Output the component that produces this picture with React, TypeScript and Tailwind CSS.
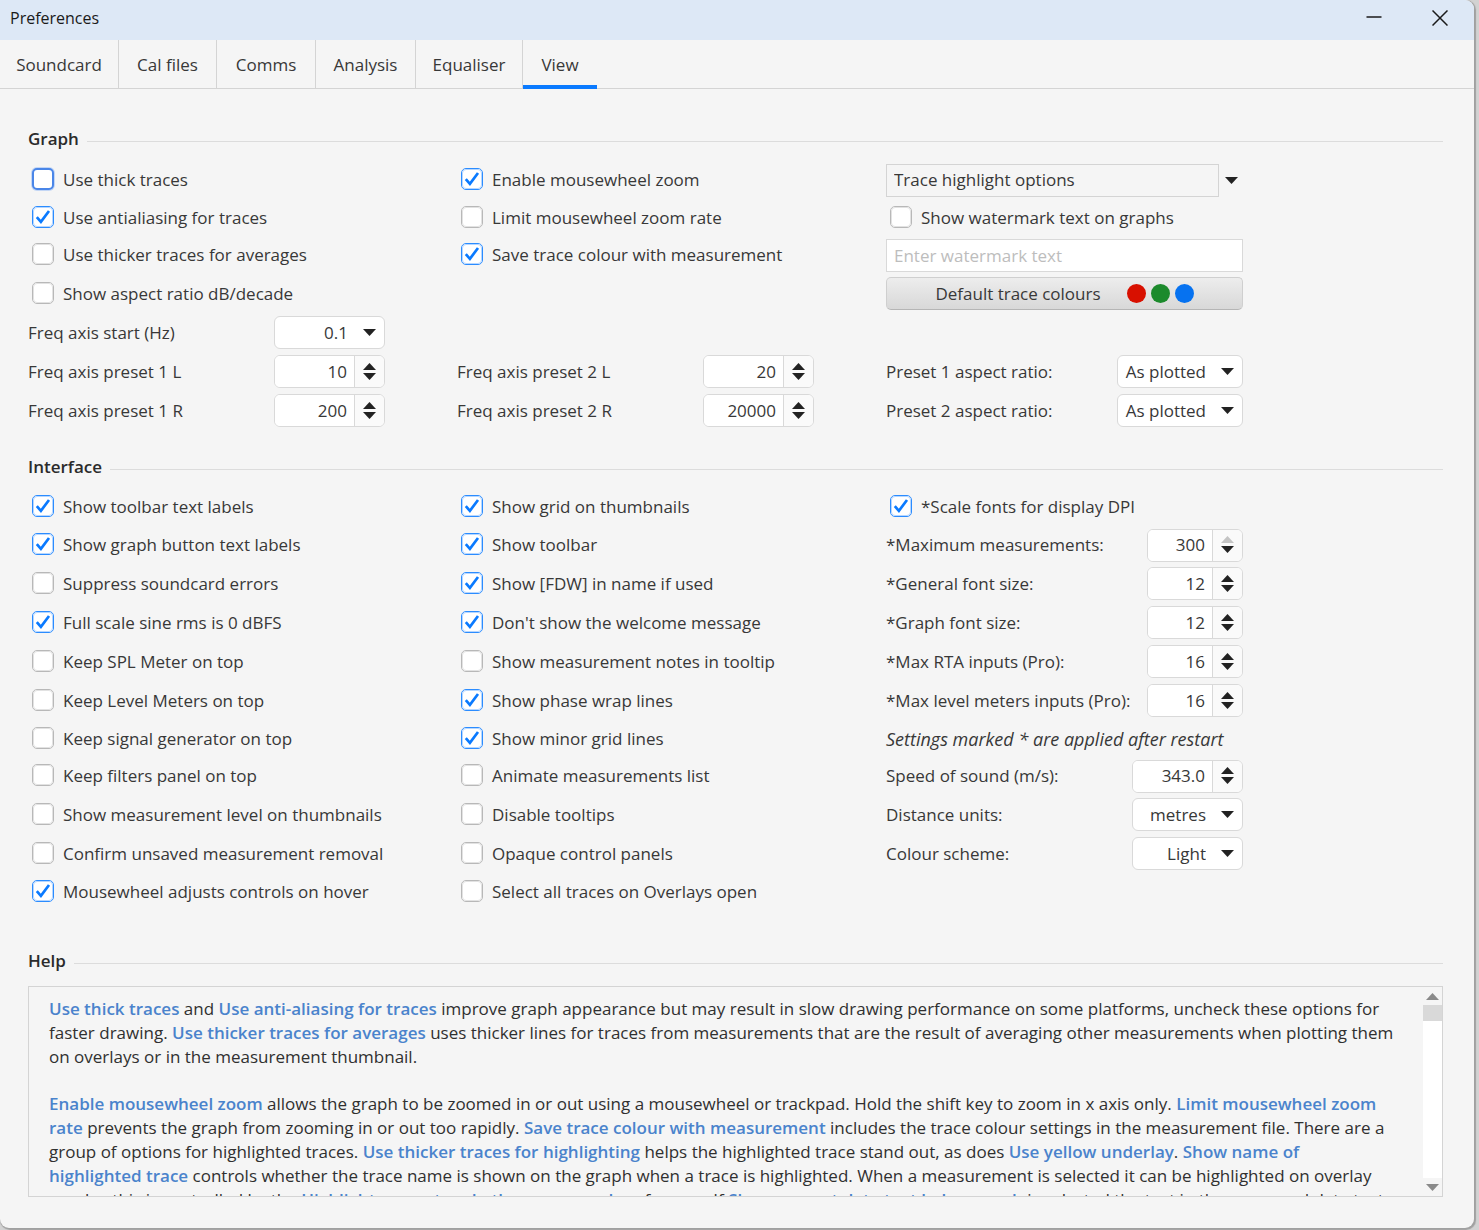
import React, { useId } from "react";

function TriangleDown({ className = "" }: { className?: string }) {
  return (
    <svg viewBox="0 0 13 7" className={`h-[7px] w-[13px] ${className}`} aria-hidden="true">
      <path d="M0 0H13L6.5 7Z" fill="currentColor" />
    </svg>
  );
}

function TriangleUp({ className = "" }: { className?: string }) {
  return (
    <svg viewBox="0 0 13 7" className={`h-[7px] w-[13px] ${className}`} aria-hidden="true">
      <path d="M0 7H13L6.5 0Z" fill="currentColor" />
    </svg>
  );
}

function Check({ label, on = false, focused = false }: { label: string; on?: boolean; focused?: boolean }) {
  return (
    <label className="flex items-center gap-[9px] pl-1 whitespace-nowrap">
      <span className="grid h-6 shrink-0 place-items-start">
        <input
          type="checkbox"
          defaultChecked={on}
          className={`peer col-start-1 row-start-1 h-[22px] w-[22px] appearance-none rounded-[5px] bg-white ${
            focused
              ? "border-2 border-[#4a86e8] ring-1 ring-[#c3d6f5]"
              : "border border-[#b8b8b8] checked:border-[#2b8cff] outline outline-[#e2e2e2] -outline-offset-2 checked:outline-[#b5d6ff]"
          }`}
        />
        <svg
          viewBox="0 0 22 22"
          className="pointer-events-none invisible col-start-1 row-start-1 h-[22px] w-[22px] peer-checked:visible"
          aria-hidden="true"
        >
          <path d="M4.8 11.2L8.9 15.8L17 5" fill="none" stroke="#0a7aff" strokeWidth="2.7" />
        </svg>
      </span>
      {label}
    </label>
  );
}

function Field({ label, children }: { label: string; children: (id: string) => React.ReactNode }) {
  const id = useId();
  return (
    <div className="flex w-[357px] items-center justify-between whitespace-nowrap">
      <label htmlFor={id}>{label}</label>
      {children(id)}
    </div>
  );
}

function Spin({ label, value, width, max = false }: { label: string; value: string; width: string; max?: boolean }) {
  return (
    <Field label={label}>
      {(id) => (
        <div className={`flex h-[33px] overflow-hidden rounded-md border border-[#d9d9d9] bg-white ${width}`}>
          <input
            id={id}
            type="text"
            inputMode="decimal"
            defaultValue={value}
            className="min-w-0 flex-1 bg-white pr-[7px] text-right outline-none"
          />
          <div className="flex w-[30px] flex-col items-center justify-center gap-[3px] border-l border-[#d9d9d9] bg-[#fafafa] pb-px">
            <button type="button" aria-label={`Increase ${label}`} disabled={max} className="text-[#222] disabled:text-[#c4c4c4]">
              <TriangleUp className="block" />
            </button>
            <button type="button" aria-label={`Decrease ${label}`} className="text-[#222]">
              <TriangleDown className="block" />
            </button>
          </div>
        </div>
      )}
    </Field>
  );
}

function Select({ label, value, width }: { label: string; value: string; width: string }) {
  return (
    <Field label={label}>
      {(id) => (
        <div className={`grid h-[33px] items-center ${width}`}>
          <select
            id={id}
            className="col-start-1 row-start-1 h-full w-full appearance-none rounded-md border border-[#d9d9d9] bg-white pr-9 text-right [text-align-last:right]"
          >
            <option>{value}</option>
          </select>
          <TriangleDown className="pointer-events-none col-start-1 row-start-1 mr-[9px] justify-self-end text-[#222]" />
        </div>
      )}
    </Field>
  );
}

function Heading({ children }: { children: string }) {
  return (
    <h2 className="flex h-6 items-center gap-2 font-semibold text-[#2b2b2b]">
      {children}
      <span className="mt-1 h-px flex-1 bg-[#dcdcdc]" />
    </h2>
  );
}

function Title({ children }: { children: string }) {
  return <b className="font-semibold text-[#4a83cc]">{children}</b>;
}

const TABS = [
  { name: "Soundcard", width: "w-[119px]" },
  { name: "Cal files", width: "w-[98px]" },
  { name: "Comms", width: "w-[99px]" },
  { name: "Analysis", width: "w-[100px]" },
  { name: "Equaliser", width: "w-[107px]" },
];

export default function App() {
  return (
    <div className="min-h-screen bg-[#d2d2d2] pr-[5px] pb-[3px] font-['Open_Sans','Noto_Sans',sans-serif] text-[17px] leading-6 text-[#383838]">
      <main className="overflow-hidden rounded-tr-[9px] rounded-b-[9px] bg-[#f5f5f5] shadow-[1px_1px_1px_1px_#a0a0a0]">
        <header className="flex h-10 items-center justify-between bg-[#dde8f6] pr-[26px] pb-1 pl-[10px] text-[#1a1a1a]">
          <h1 className="text-base">Preferences</h1>
          <div className="flex items-center gap-[50px]">
            <button type="button" aria-label="Minimise" className="block">
              <svg viewBox="0 0 16 16" className="block h-4 w-4" aria-hidden="true">
                <path d="M0.5 7H15.5" stroke="#1a1a1a" strokeWidth="1.7" />
              </svg>
            </button>
            <button type="button" aria-label="Close" className="block">
              <svg viewBox="0 0 16 16" className="block h-4 w-4" aria-hidden="true">
                <path d="M0.5 0.5L15.5 15.5M15.5 0.5L0.5 15.5" stroke="#1a1a1a" strokeWidth="1.5" />
              </svg>
            </button>
          </div>
        </header>

        <nav role="tablist" className="flex h-[49px] border-b border-[#d4d4d4]">
          {TABS.map((t) => (
            <button
              key={t.name}
              type="button"
              role="tab"
              aria-selected="false"
              className={`border-r border-[#d4d4d4] pt-0.5 ${t.width}`}
            >
              {t.name}
            </button>
          ))}
          <button
            type="button"
            role="tab"
            aria-selected="true"
            className="-mb-px h-[49px] w-[74px] border-b-4 border-[#0a7aff] pt-1"
          >
            View
          </button>
        </nav>

        <div className="pt-[38px] pr-[31px] pb-[31px] pl-7">
          <section>
            <Heading>Graph</Heading>
            <div className="mt-[10px] grid grid-flow-col grid-cols-[429fr_429fr_557fr] grid-rows-[38px_37px_38px_39px_39px_39px_39px] items-center">
              <Check label="Use thick traces" focused />
              <Check label="Use antialiasing for traces" on />
              <Check label="Use thicker traces for averages" />
              <Check label="Show aspect ratio dB/decade" />
              <Select label="Freq axis start (Hz)" value="0.1" width="w-[111px]" />
              <Spin label="Freq axis preset 1 L" value="10" width="w-[111px]" />
              <Spin label="Freq axis preset 1 R" value="200" width="w-[111px]" />

              <Check label="Enable mousewheel zoom" on />
              <Check label="Limit mousewheel zoom rate" />
              <Check label="Save trace colour with measurement" on />
              <span className="row-span-2" />
              <Spin label="Freq axis preset 2 L" value="20" width="w-[111px]" />
              <Spin label="Freq axis preset 2 R" value="20000" width="w-[111px]" />

              <div className="grid h-[33px] w-[357px] grid-cols-[333px_24px] items-center">
                <select
                  aria-label="Trace highlight options"
                  className="col-span-2 col-start-1 row-start-1 h-full w-full appearance-none pl-2"
                >
                  <option>Trace highlight options</option>
                </select>
                <span className="pointer-events-none col-start-1 row-start-1 h-full border border-[#d4d4d4]" />
                <TriangleDown className="pointer-events-none col-start-2 row-start-1 ml-[6px] text-[#222]" />
              </div>
              <Check label="Show watermark text on graphs" />
              <input
                type="text"
                aria-label="Watermark text"
                placeholder="Enter watermark text"
                className="h-[33px] w-[357px] border border-[#d9d9d9] bg-white px-[7px] placeholder:text-[#bdbdbd]"
              />
              <button
                type="button"
                className="flex h-[33px] w-[357px] items-center justify-center gap-[26px] rounded-[5px] border border-[#cfcfcf] border-b-[#b5b5b5] bg-linear-to-b from-[#ededed] to-[#d8d8d8]"
              >
                Default trace colours
                <span className="flex gap-[5px]">
                  <span className="h-[19px] w-[19px] rounded-full bg-[#d81000]" />
                  <span className="h-[19px] w-[19px] rounded-full bg-[#1c8a2c]" />
                  <span className="h-[19px] w-[19px] rounded-full bg-[#0672f0]" />
                </span>
              </button>
              <span />
              <Select label="Preset 1 aspect ratio:" value="As plotted" width="w-[126px]" />
              <Select label="Preset 2 aspect ratio:" value="As plotted" width="w-[126px]" />
            </div>
          </section>

          <section className="mt-[25px]">
            <Heading>Interface</Heading>
            <div className="mt-[9px] grid grid-flow-col grid-cols-[429fr_429fr_557fr] grid-rows-[38px_38px_39px_39px_39px_39px_37px_38px_39px_39px_37px] items-center">
              <Check label="Show toolbar text labels" on />
              <Check label="Show graph button text labels" on />
              <Check label="Suppress soundcard errors" />
              <Check label="Full scale sine rms is 0 dBFS" on />
              <Check label="Keep SPL Meter on top" />
              <Check label="Keep Level Meters on top" />
              <Check label="Keep signal generator on top" />
              <Check label="Keep filters panel on top" />
              <Check label="Show measurement level on thumbnails" />
              <Check label="Confirm unsaved measurement removal" />
              <Check label="Mousewheel adjusts controls on hover" on />

              <Check label="Show grid on thumbnails" on />
              <Check label="Show toolbar" on />
              <Check label="Show [FDW] in name if used" on />
              <Check label="Don't show the welcome message" on />
              <Check label="Show measurement notes in tooltip" />
              <Check label="Show phase wrap lines" on />
              <Check label="Show minor grid lines" on />
              <Check label="Animate measurements list" />
              <Check label="Disable tooltips" />
              <Check label="Opaque control panels" />
              <Check label="Select all traces on Overlays open" />

              <Check label="*Scale fonts for display DPI" on />
              <Spin label="*Maximum measurements:" value="300" width="w-24" max />
              <Spin label="*General font size:" value="12" width="w-24" />
              <Spin label="*Graph font size:" value="12" width="w-24" />
              <Spin label="*Max RTA inputs (Pro):" value="16" width="w-24" />
              <Spin label="*Max level meters inputs (Pro):" value="16" width="w-24" />
              <p className="text-lg leading-6 italic">Settings marked * are applied after restart</p>
              <Spin label="Speed of sound (m/s):" value="343.0" width="w-[111px]" />
              <Select label="Distance units:" value="metres" width="w-[111px]" />
              <Select label="Colour scheme:" value="Light" width="w-[111px]" />
            </div>
          </section>

          <section className="mt-[39px]">
            <Heading>Help</Heading>
            <div className="mt-[13px] flex h-[211px] border border-[#d4d4d4] text-[#303030]">
              <div className="flex-1 overflow-hidden pt-[10px] pl-5 whitespace-nowrap">
                <p className="mb-[23px]">
                  <Title>Use thick traces</Title> and <Title>Use anti-aliasing for traces</Title> improve graph
                  appearance but may result in slow drawing performance on some platforms, uncheck these options for
                  <br />
                  faster drawing. <Title>Use thicker traces for averages</Title> uses thicker lines for traces from
                  measurements that are the result of averaging other measurements when plotting them
                  <br />
                  on overlays or in the measurement thumbnail.
                </p>
                <p>
                  <Title>Enable mousewheel zoom</Title> allows the graph to be zoomed in or out using a mousewheel or
                  trackpad. Hold the shift key to zoom in x axis only. <Title>Limit mousewheel zoom</Title>
                  <br />
                  <Title>rate</Title> prevents the graph from zooming in or out too rapidly.{" "}
                  <Title>Save trace colour with measurement</Title> includes the trace colour settings in the
                  measurement file. There are a
                  <br />
                  group of options for highlighted traces. <Title>Use thicker traces for highlighting</Title> helps the
                  highlighted trace stand out, as does <Title>Use yellow underlay</Title>.{" "}
                  <Title>Show name of</Title>
                  <br />
                  <Title>highlighted trace</Title> controls whether the trace name is shown on the graph when a trace
                  is highlighted. When a measurement is selected it can be highlighted on overlay
                  <br />
                  graphs, this is controlled by the <Title>Highlight current and other measured</Title> preference. If{" "}
                  <Title>Show current data text below graph</Title> is selected the text in the name and data text
                </p>
              </div>
              <div className="flex w-[19px] shrink-0 flex-col">
                <button type="button" aria-label="Scroll up" className="flex h-[18px] items-center justify-center text-[#8a8a8a]">
                  <TriangleUp />
                </button>
                <div className="flex-1 bg-white">
                  <div className="h-4 bg-[#d9d9d9]" />
                </div>
                <button type="button" aria-label="Scroll down" className="flex h-[18px] items-center justify-center text-[#8a8a8a]">
                  <TriangleDown />
                </button>
              </div>
            </div>
          </section>
        </div>
      </main>
    </div>
  );
}
